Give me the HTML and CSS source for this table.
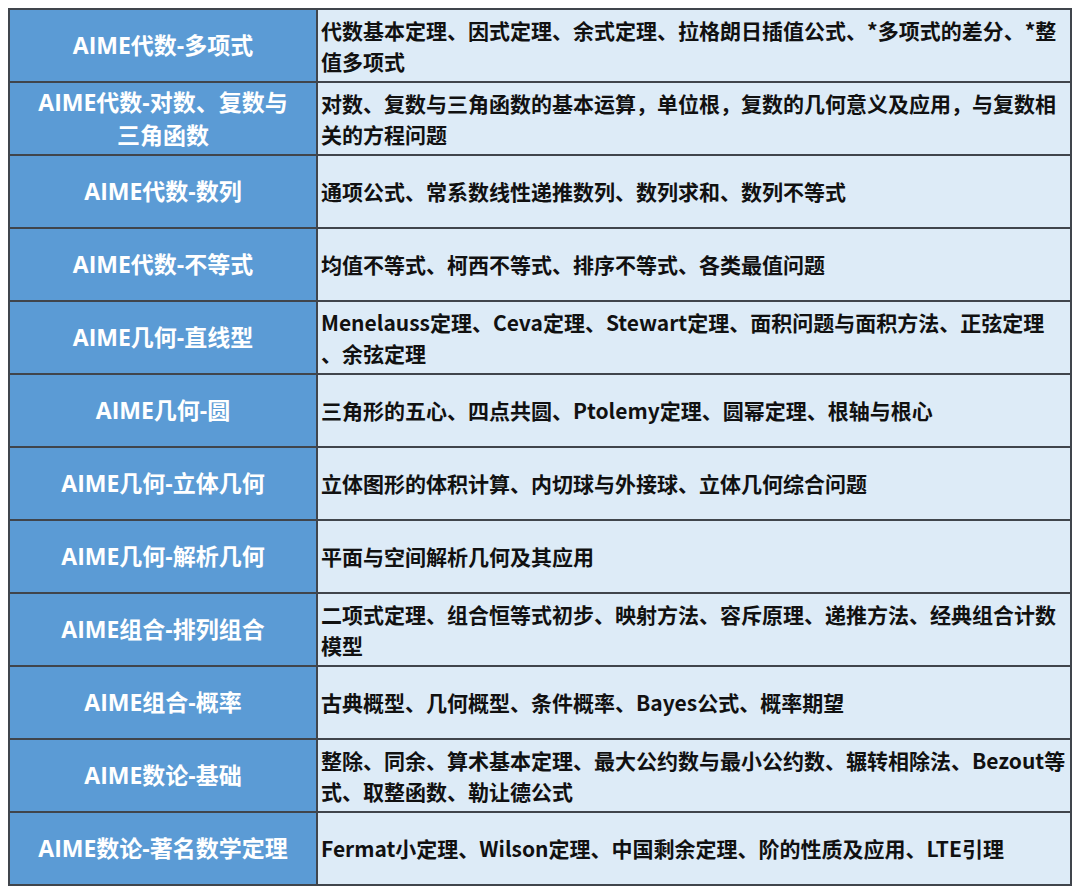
FILE: index.html
```html
<!DOCTYPE html>
<html lang="zh-CN">
<head>
<meta charset="utf-8">
<title>AIME 知识点</title>
<link rel="stylesheet" href="styles.css">
</head>
<body>
<table class="topics">
  <tbody>
    <tr><th class="topic">AIME代数-多项式</th><td class="desc">代数基本定理、因式定理、余式定理、拉格朗日插值公式、*多项式的差分、*整值多项式</td></tr>
    <tr><th class="topic">AIME代数-对数、复数与三角函数</th><td class="desc">对数、复数与三角函数的基本运算，单位根，复数的几何意义及应用，与复数相关的方程问题</td></tr>
    <tr><th class="topic">AIME代数-数列</th><td class="desc">通项公式、常系数线性递推数列、数列求和、数列不等式</td></tr>
    <tr><th class="topic">AIME代数-不等式</th><td class="desc">均值不等式、柯西不等式、排序不等式、各类最值问题</td></tr>
    <tr><th class="topic">AIME几何-直线型</th><td class="desc">Menelauss定理、Ceva定理、Stewart定理、面积问题与面积方法、正弦定理<br>、余弦定理</td></tr>
    <tr><th class="topic">AIME几何-圆</th><td class="desc">三角形的五心、四点共圆、Ptolemy定理、圆幂定理、根轴与根心</td></tr>
    <tr><th class="topic">AIME几何-立体几何</th><td class="desc">立体图形的体积计算、内切球与外接球、立体几何综合问题</td></tr>
    <tr><th class="topic">AIME几何-解析几何</th><td class="desc">平面与空间解析几何及其应用</td></tr>
    <tr><th class="topic">AIME组合-排列组合</th><td class="desc">二项式定理、组合恒等式初步、映射方法、容斥原理、递推方法、经典组合计数模型</td></tr>
    <tr><th class="topic">AIME组合-概率</th><td class="desc">古典概型、几何概型、条件概率、Bayes公式、概率期望</td></tr>
    <tr><th class="topic">AIME数论-基础</th><td class="desc">整除、同余、算术基本定理、最大公约数与最小公约数、辗转相除法、Bezout等<br>式、取整函数、勒让德公式</td></tr>
    <tr><th class="topic">AIME数论-著名数学定理</th><td class="desc">Fermat小定理、Wilson定理、中国剩余定理、阶的性质及应用、LTE引理</td></tr>
  </tbody>
</table>
</body>
</html>
```
FILE: styles.css
```css
html, body {
  background: #ffffff;
}
body {
  margin: 8px;
  font-family: "Noto Sans CJK SC", "Microsoft YaHei", sans-serif;
}
.topics {
  border-collapse: collapse;
  width: 1064px;
  table-layout: fixed;
}
.topics tr {
  height: 73px;
}
.topic, .desc {
  border: 2px solid #40454c;
  vertical-align: middle;
  font-weight: 700;
}
.topic {
  width: 308px;
  background: #5b9bd5;
  color: #ffffff;
  font-family: "Open Sans", "Noto Sans CJK SC", sans-serif;
  font-size: 23px;
  line-height: 33px;
  text-align: center;
  padding: 0 20px;
  box-sizing: border-box;
}
.desc {
  background: #ddebf7;
  color: #111111;
  font-size: 21px;
  line-height: 31px;
  text-align: left;
  padding: 0 4px 0 3px;
}
```
